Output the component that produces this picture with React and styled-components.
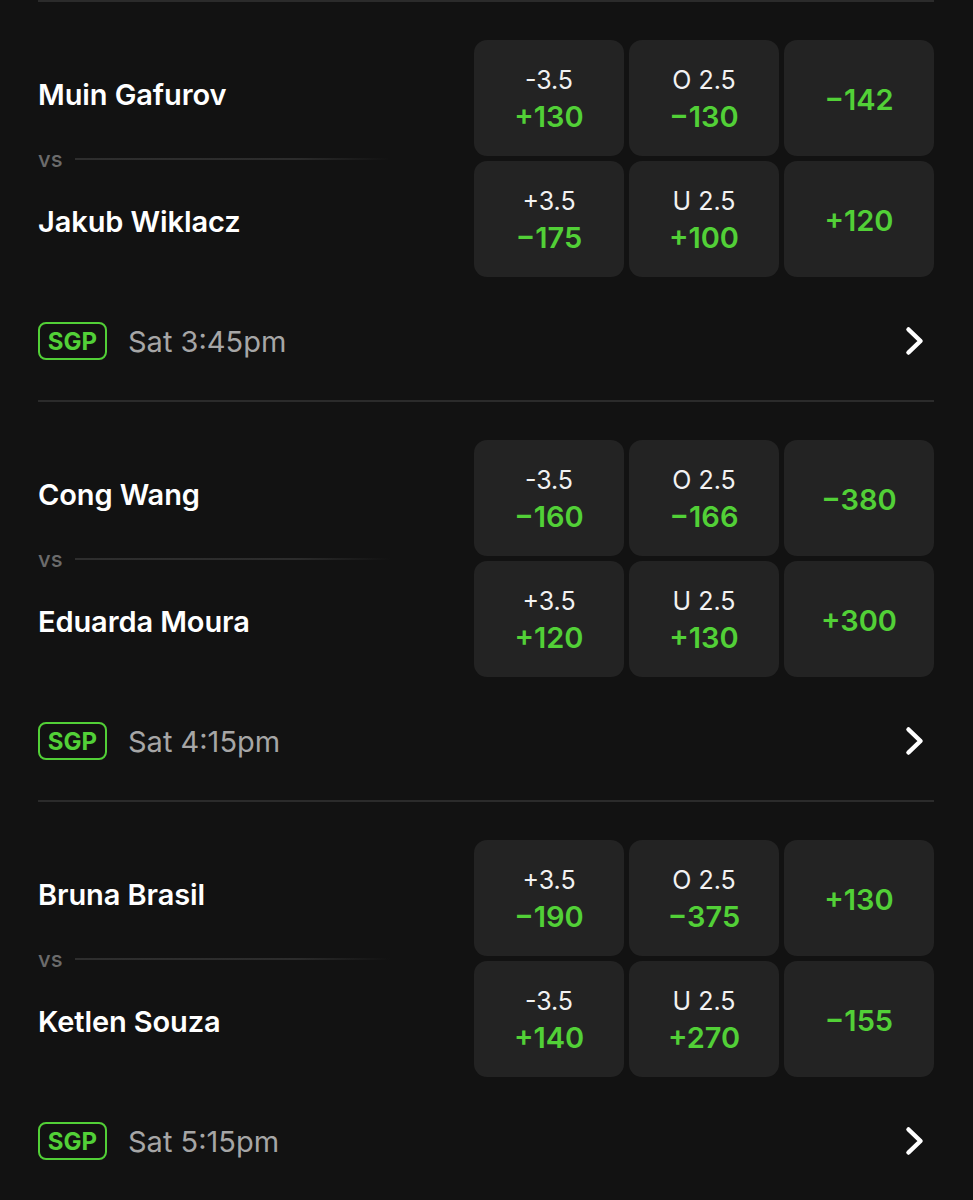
import React from "react";
import styled, { createGlobalStyle } from "styled-components";

const GlobalStyle = createGlobalStyle`
  html, body {
    margin: 0;
    padding: 0;
    background: #121212;
  }
  body {
    font-family: Inter, "Noto Sans", "Liberation Sans", sans-serif;
    -webkit-font-smoothing: antialiased;
  }
`;

const GREEN = "#52d037";

const Page = styled.div`
  background: #121212;
  min-height: 1200px;
  padding: 0 39px 0 38px;
  overflow: hidden;
`;

const Divider = styled.div`
  height: 2px;
  background: #2b2b2b;
`;

const Event = styled.section`
  padding: 38px 0 40px;
`;

const Matchup = styled.div`
  display: flex;
  justify-content: space-between;
  align-items: stretch;
  height: 237px;
`;

const Fighters = styled.div`
  display: grid;
  grid-template-rows: 1fr auto 1fr;
  width: 380px;
`;

const Name = styled.div`
  display: flex;
  align-items: center;
  padding-top: ${(p) => (p.$second ? "0" : "3px")};
  padding-bottom: 2px;
  color: #ffffff;
  font-size: 29px;
  font-weight: 600;
  letter-spacing: -0.1px;
`;

const Versus = styled.div`
  display: flex;
  align-items: center;
  gap: 12px;
  height: 20px;
  color: #6b6b6b;
  font-size: 22px;
  font-weight: 500;
  line-height: 20px;
`;

const VsLine = styled.span`
  flex: 0 0 315px;
  height: 2px;
  background: linear-gradient(to right, #2e2e2e 0%, #2c2c2c 70%, rgba(44, 44, 44, 0) 100%);
  margin-top: 1px;
`;

const Odds = styled.div`
  display: grid;
  grid-template-columns: repeat(3, 150px);
  grid-template-rows: repeat(2, 116px);
  gap: 5px;
`;

const Cell = styled.button`
  all: unset;
  box-sizing: border-box;
  display: flex;
  flex-direction: column;
  align-items: center;
  justify-content: center;
  gap: 5px;
  padding-top: 3px;
  background: #232323;
  border-radius: 13px;
  font-family: Inter, "Noto Sans", "Liberation Sans", sans-serif;
`;

const Line = styled.span`
  color: #f2f2f2;
  font-size: 25px;
  font-weight: 400;
  line-height: 30px;
`;

const Price = styled.span`
  color: ${GREEN};
  font-size: 29px;
  font-weight: 600;
  line-height: 34px;
`;

const Footer = styled.div`
  display: flex;
  align-items: center;
  margin-top: 45px;
  height: 38px;
`;

const Badge = styled.span`
  box-sizing: border-box;
  display: inline-flex;
  align-items: center;
  justify-content: center;
  width: 69px;
  height: 38px;
  border: 2px solid ${GREEN};
  border-radius: 8px;
  color: ${GREEN};
  font-size: 24px;
  font-weight: 700;
`;

const Time = styled.span`
  margin-left: 21px;
  color: #a6a6a6;
  font-size: 29px;
  font-weight: 400;
`;

const Chevron = styled.svg`
  margin-left: auto;
  margin-right: 8px;
  width: 24px;
  height: 32px;
`;

const events = [
  {
    a: "Muin Gafurov",
    b: "Jakub Wiklacz",
    rows: [
      [["-3.5", "+130"], ["O 2.5", "−130"], [null, "−142"]],
      [["+3.5", "−175"], ["U 2.5", "+100"], [null, "+120"]],
    ],
    time: "Sat 3:45pm",
  },
  {
    a: "Cong Wang",
    b: "Eduarda Moura",
    rows: [
      [["-3.5", "−160"], ["O 2.5", "−166"], [null, "−380"]],
      [["+3.5", "+120"], ["U 2.5", "+130"], [null, "+300"]],
    ],
    time: "Sat 4:15pm",
  },
  {
    a: "Bruna Brasil",
    b: "Ketlen Souza",
    rows: [
      [["+3.5", "−190"], ["O 2.5", "−375"], [null, "+130"]],
      [["-3.5", "+140"], ["U 2.5", "+270"], [null, "−155"]],
    ],
    time: "Sat 5:15pm",
  },
];

function ChevronIcon() {
  return (
    <Chevron viewBox="0 0 24 32" fill="none">
      <path
        d="M6.5 4.5 L18.5 16 L6.5 27.5"
        stroke="#ffffff"
        strokeWidth="4.5"
        strokeLinecap="round"
        strokeLinejoin="round"
      />
    </Chevron>
  );
}

export default function App() {
  return (
    <>
      <GlobalStyle />
      <Page>
        {events.map((ev) => (
          <React.Fragment key={ev.a}>
            <Divider />
            <Event>
              <Matchup>
                <Fighters>
                  <Name>{ev.a}</Name>
                  <Versus>
                    vs
                    <VsLine />
                  </Versus>
                  <Name $second>{ev.b}</Name>
                </Fighters>
                <Odds>
                  {ev.rows.flat().map(([line, price], i) => (
                    <Cell key={i}>
                      {line && <Line>{line}</Line>}
                      <Price>{price}</Price>
                    </Cell>
                  ))}
                </Odds>
              </Matchup>
              <Footer>
                <Badge>SGP</Badge>
                <Time>{ev.time}</Time>
                <ChevronIcon />
              </Footer>
            </Event>
          </React.Fragment>
        ))}
        <Divider />
      </Page>
    </>
  );
}
